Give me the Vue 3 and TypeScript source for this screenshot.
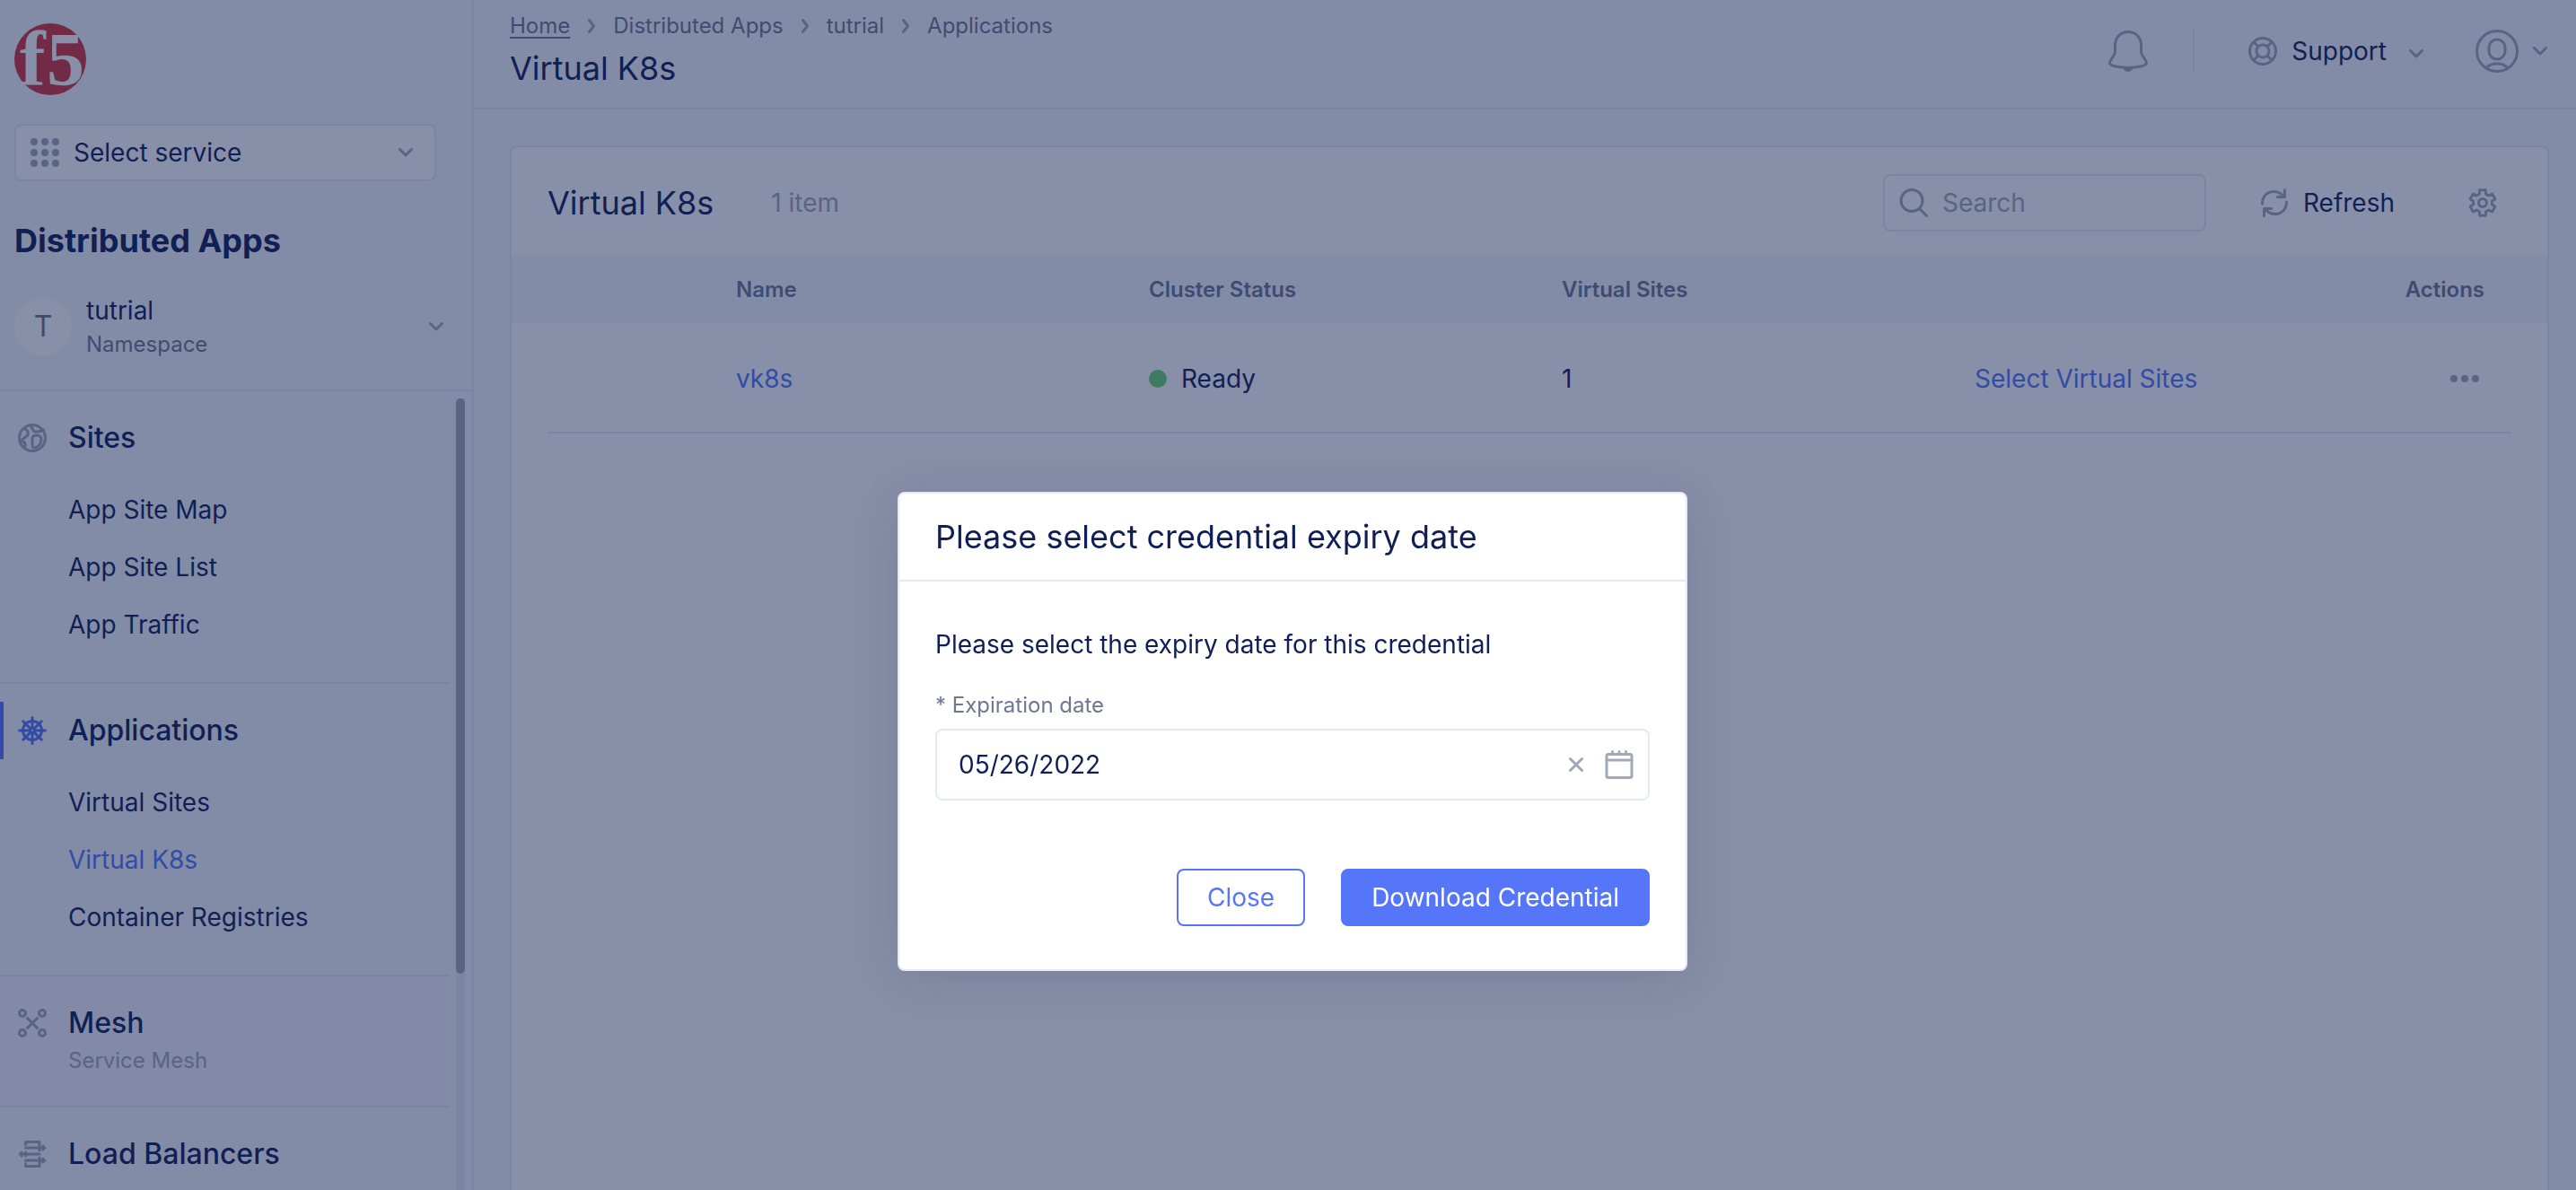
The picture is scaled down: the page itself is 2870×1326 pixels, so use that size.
<script setup lang="ts">
import { ref } from 'vue'

interface NavSection {
  title: string
  icon: 'globe' | 'helm' | 'mesh' | 'balancer'
  active?: boolean
  hovered?: boolean
  subtitle?: string
  items: string[]
}

interface Row {
  name: string
  status: string
  sites: number
}

const sections: NavSection[] = [
  { title: 'Sites', icon: 'globe', items: ['App Site Map', 'App Site List', 'App Traffic'] },
  { title: 'Applications', icon: 'helm', active: true, items: ['Virtual Sites', 'Virtual K8s', 'Container Registries'] },
  { title: 'Mesh', icon: 'mesh', hovered: true, subtitle: 'Service Mesh', items: [] },
  { title: 'Load Balancers', icon: 'balancer', items: [] },
]

const currentItem = 'Virtual K8s'
const crumbs = ['Home', 'Distributed Apps', 'tutrial', 'Applications']
const rows: Row[] = [{ name: 'vk8s', status: 'Ready', sites: 1 }]

const service = ref('Select service')
const search = ref('')
const expiry = ref('05/26/2022')
const dialogOpen = ref(true)

// Six-toothed gear outline, centred in a 32px box.
function gearPath(): string {
  const points: string[] = []
  const add = (radius: number, degrees: number) => {
    const a = (degrees * Math.PI) / 180
    points.push(`${(16 + radius * Math.cos(a)).toFixed(2)} ${(16 + radius * Math.sin(a)).toFixed(2)}`)
  }
  for (let i = 0; i < 6; i++) {
    const mid = -90 + i * 60
    add(10.5, mid - 20)
    add(14.5, mid - 13)
    add(14.5, mid + 13)
    add(10.5, mid + 20)
  }
  return `M${points.join('L')}Z`
}
const gear = gearPath()
const spokes = [0, 45, 90, 135, 180, 225, 270, 315]
</script>

<template>
  <div class="app">
    <aside class="sidebar">
      <div class="brand">
        <svg class="logo" viewBox="0 0 80 80" role="img" aria-label="f5">
          <circle cx="40" cy="40" r="40" fill="#d3353d" />
          <g fill="#fff" font-family="Liberation Serif, serif" font-weight="700">
            <text x="6" y="69" font-size="86">f</text>
            <text x="36" y="69" font-size="84">5</text>
          </g>
        </svg>
        <div class="service">
          <svg class="i32" viewBox="0 0 32 32" fill="#a1a9b9">
            <template v-for="y in [4, 16, 28]" :key="y">
              <circle v-for="x in [4, 16, 28]" :key="x" :cx="x" :cy="y" r="4" />
            </template>
          </svg>
          <select v-model="service" aria-label="Service">
            <option>Select service</option>
            <option>Distributed Apps</option>
          </select>
          <svg class="chevron" viewBox="0 0 16 10"><path d="M1.5 1.5L8 8L14.5 1.5" /></svg>
        </div>
        <h2>Distributed Apps</h2>
        <button class="namespace" type="button">
          <span class="avatar">T</span>
          <span class="ns-text">
            <span class="ns-name">tutrial</span>
            <span class="ns-kind">Namespace</span>
          </span>
          <svg class="chevron" viewBox="0 0 16 10"><path d="M1.5 1.5L8 8L14.5 1.5" /></svg>
        </button>
      </div>

      <div class="scroll">
        <nav>
          <section v-for="s in sections" :key="s.title" class="group" :class="{ hovered: s.hovered }">
            <div class="group-head" :class="{ active: s.active }">
              <svg v-if="s.icon === 'globe'" class="i32 line" viewBox="0 0 32 32">
                <circle cx="16" cy="16" r="14.500" />
                <path d="M7 5L11 8.500V13L4 18.500L8 22V27M14 2L18 9H23L28.500 7M16 17Q16 13 20 13H22Q26 14 26 18Q25 25 19 27Q16 27 16 24Z" />
              </svg>
              <svg v-else-if="s.icon === 'helm'" class="i32 line helm" viewBox="0 0 32 32">
                <circle cx="16" cy="16" r="10.500" />
                <circle cx="16" cy="16" r="2.500" />
                <path v-for="d in spokes" :key="d" d="M16 13V1.500" :transform="`rotate(${d} 16 16)`" />
              </svg>
              <svg v-else-if="s.icon === 'mesh'" class="i32 line" viewBox="0 0 32 32">
                <circle cx="5" cy="5" r="3.500" /><circle cx="27" cy="5" r="3.500" />
                <circle cx="5" cy="27" r="3.500" /><circle cx="27" cy="27" r="3.500" />
                <path d="M10.500 10.500L21.500 21.500M21.500 10.500L10.500 21.500" />
              </svg>
              <svg v-else class="i32 line" viewBox="0 0 32 32">
                <path d="M8.500 5.500V2.500H24V12M8.500 9H30M28 7V11M2 16H24M4 14V18M8.500 14V18M8.500 23H30M28 21V25M8.500 26.500V29.500H24V20" />
              </svg>
              <div>
                <h3>{{ s.title }}</h3>
                <p v-if="s.subtitle">{{ s.subtitle }}</p>
              </div>
            </div>
            <ul v-if="s.items.length">
              <li v-for="item in s.items" :key="item">
                <a href="#" :class="{ current: item === currentItem }">{{ item }}</a>
              </li>
            </ul>
          </section>
        </nav>
        <div class="track"><div class="thumb"></div></div>
      </div>
    </aside>

    <main>
      <header class="topbar">
        <div class="where">
          <div class="crumbs">
            <template v-for="(c, i) in crumbs" :key="c">
              <svg v-if="i > 0" class="crumb-sep" viewBox="0 0 8 16"><path d="M1.500 1.500L6.500 8L1.500 14.500" /></svg>
              <a href="#" :class="{ home: i === 0 }">{{ c }}</a>
            </template>
          </div>
          <h1>Virtual K8s</h1>
        </div>
        <div class="tools">
          <button type="button" class="bell" aria-label="Notifications">
            <svg class="line" viewBox="0 0 44 48">
              <path d="M22 2.500C13 2.500 7.500 9.500 7.500 17V24C7.500 30 1.500 33 1.500 37C1.500 40.500 12 42.500 22 42.500S42.500 40.500 42.500 37C42.500 33 36.500 30 36.500 24V17C36.500 9.500 31 2.500 22 2.500Z" />
              <path d="M17 43H27Q26 46.500 22 46.500T17 43Z" fill="#a1a9b9" stroke-width="1" />
            </svg>
          </button>
          <span class="divider"></span>
          <button type="button" class="support">
            <svg class="i32 line" viewBox="0 0 32 32">
              <circle cx="16" cy="16" r="14.500" />
              <circle cx="16" cy="16" r="7" />
              <path d="M21.500 10.500L26 6M10.500 10.500L6 6M21.500 21.500L26 26M10.500 21.500L6 26" />
            </svg>
            <span>Support</span>
            <svg class="chevron" viewBox="0 0 16 10"><path d="M1.5 1.5L8 8L14.5 1.5" /></svg>
          </button>
          <button type="button" class="account" aria-label="Account">
            <svg class="line" viewBox="0 0 48 48">
              <circle cx="24" cy="24" r="22.500" />
              <rect x="15" y="11" width="18" height="22" rx="9" />
              <path d="M12.500 42.500Q16 38 24 38T35.500 42.500" />
            </svg>
            <svg class="chevron" viewBox="0 0 16 10"><path d="M1.5 1.5L8 8L14.5 1.5" /></svg>
          </button>
        </div>
      </header>

      <div class="content">
        <div class="card">
          <div class="toolbar">
            <h2>Virtual K8s</h2>
            <span class="count">{{ rows.length }} item</span>
            <label class="search">
              <svg class="i32 line" viewBox="0 0 32 32">
                <circle cx="14" cy="13.500" r="12" /><path d="M22.500 22.500L30.500 30.500" />
              </svg>
              <input v-model="search" type="text" placeholder="Search" aria-label="Search" />
            </label>
            <button type="button" class="refresh">
              <svg class="i32 line" viewBox="0 0 32 32">
                <path d="M2.500 17C2.500 8.500 8.500 3.500 15 3.500C20 3.500 24 5.500 27 9.500M27.500 1.500V9.500H19.500M29.500 15C29.500 23.500 23.500 28.500 17 28.500C12 28.500 8 26.500 5 22.500M4.500 30.500V22.500H12.500" />
              </svg>
              <span>Refresh</span>
            </button>
            <button type="button" class="settings" aria-label="Settings">
              <svg class="i32 line" viewBox="0 0 32 32"><path :d="gear" /><circle cx="16" cy="16" r="4.500" /></svg>
            </button>
          </div>
          <table>
            <colgroup>
              <col class="gutter" /><col class="lead" /><col class="wide" /><col class="wide" /><col class="wide" /><col /><col class="end" /><col class="gutter" />
            </colgroup>
            <thead>
              <tr>
                <td></td>
                <td></td>
                <th scope="col">Name</th>
                <th scope="col">Cluster Status</th>
                <th scope="col">Virtual Sites</th>
                <td></td>
                <th scope="col" class="right">Actions</th>
                <td></td>
              </tr>
            </thead>
            <tbody>
              <tr v-for="r in rows" :key="r.name">
                <td></td>
                <td></td>
                <td><a href="#">{{ r.name }}</a></td>
                <td><span class="status"><i></i>{{ r.status }}</span></td>
                <td>{{ r.sites }}</td>
                <td><a href="#">Select Virtual Sites</a></td>
                <td class="right">
                  <button type="button" class="more" aria-label="More actions">
                    <svg viewBox="0 0 32 8" fill="#a1a9b9"><circle cx="4" cy="4" r="4" /><circle cx="16" cy="4" r="4" /><circle cx="28" cy="4" r="4" /></svg>
                  </button>
                </td>
                <td></td>
              </tr>
            </tbody>
          </table>
        </div>
      </div>
    </main>

    <div v-if="dialogOpen" class="overlay">
      <div class="dialog" role="dialog" aria-modal="true" aria-labelledby="dialog-title">
        <h2 id="dialog-title">Please select credential expiry date</h2>
        <div class="dialog-body">
          <p>Please select the expiry date for this credential</p>
          <label for="expiry">* Expiration date</label>
          <div class="date">
            <input id="expiry" v-model="expiry" type="text" />
            <button type="button" class="clear" aria-label="Clear date" @click="expiry = ''">
              <svg class="line" viewBox="0 0 16 16"><path d="M1.500 1.500L14.500 14.500M14.500 1.500L1.500 14.500" /></svg>
            </button>
            <button type="button" class="calendar" aria-label="Open calendar">
              <svg class="line" viewBox="0 0 32 32">
                <rect x="2" y="4.500" width="28" height="26" rx="2" />
                <path d="M2 11H30M8.500 1.500V4M16 1.500V4M23.500 1.500V4" />
              </svg>
            </button>
          </div>
          <div class="actions">
            <button type="button" class="btn" @click="dialogOpen = false">Close</button>
            <button type="button" class="btn primary">Download Credential</button>
          </div>
        </div>
      </div>
    </div>
  </div>
</template>

<style>
body {
  overflow: hidden;
}
</style>

<style scoped>
.app {
  display: flex;
  height: 100vh;
  overflow: hidden;
  background: #f5f8fc;
  color: #0f1e57;
  font-family: Inter, sans-serif;
  font-size: 28px;
  line-height: 40px;
}
.app * {
  box-sizing: border-box;
}
h1, h2, h3, p, ul {
  margin: 0;
  padding: 0;
  font-weight: 400;
}
ul {
  list-style: none;
}
a {
  color: inherit;
  text-decoration: none;
}
button, input, select {
  padding: 0;
  border: 0;
  background: none;
  color: inherit;
  font: inherit;
}
svg {
  display: block;
  flex: none;
}
.i32 {
  width: 32px;
  height: 32px;
}
.line {
  fill: none;
  stroke: #a1a9b9;
  stroke-width: 3;
  stroke-linecap: round;
  stroke-linejoin: round;
}
.line.helm {
  stroke: #5576f8;
}
.chevron {
  width: 16px;
  height: 10px;
  fill: none;
  stroke: #a1a9b9;
  stroke-width: 3;
  stroke-linecap: round;
  stroke-linejoin: round;
  pointer-events: none;
}

/* Sidebar */
.sidebar {
  display: flex;
  flex-direction: column;
  flex: none;
  width: 528px;
  border-right: 2px solid #e5e9f4;
}
.brand {
  padding: 26px 32px 32px 16px;
  border-bottom: 2px solid #e5e9f4;
}
.logo {
  width: 80px;
  height: 80px;
  overflow: visible;
}
.service {
  display: flex;
  align-items: center;
  height: 64px;
  margin: 32px 8px 0 0;
  padding: 0 24px 0 16px;
  border: 2px solid #e5e9f4;
  border-radius: 8px;
  background: #fff;
}
.service select {
  flex: 1;
  height: 40px;
  margin-left: 16px;
  appearance: none;
}
.brand h2 {
  margin-top: 42px;
  font-size: 36px;
  font-weight: 700;
  line-height: 48px;
}
.namespace {
  display: flex;
  align-items: center;
  width: 100%;
  margin-top: 34px;
  text-align: left;
}
.avatar {
  width: 64px;
  height: 64px;
  border-radius: 50%;
  background: #fff;
  color: #6d7890;
  font-size: 32px;
  line-height: 64px;
  text-align: center;
}
.ns-text {
  flex: 1;
  margin-left: 16px;
}
.ns-name, .ns-kind {
  display: block;
}
.ns-kind {
  color: #6d7890;
  font-size: 24px;
  line-height: 36px;
}
.scroll {
  display: flex;
  flex: 1;
  min-height: 0;
  overflow: hidden;
}
nav {
  flex: 1;
}
.group {
  padding: 20px 0 32px;
  border-bottom: 2px solid #e5e9f4;
}
.hovered {
  background: #f2f5fc;
}
.group-head {
  display: flex;
  padding: 12px 0 12px 20px;
}
.group-head.active {
  padding-left: 16px;
  border-left: 4px solid #5576f8;
  border-radius: 0 4px 4px 0;
}
.group-head svg {
  margin: 4px 24px 4px 0;
}
.group-head h3 {
  font-size: 32px;
  font-weight: 500;
}
.group-head p {
  margin-top: 6px;
  margin-bottom: -10px;
  color: #a1a9b9;
  font-size: 24px;
  line-height: 32px;
}
.group ul {
  margin-top: 16px;
}
.group li a {
  display: block;
  padding: 12px 0 12px 76px;
}
.group li a.current {
  color: #5576f8;
}
.track {
  flex: none;
  width: 10px;
  margin: 8px 8px 0;
  background: #e5e9f4;
}
.thumb {
  height: 641px;
  border-radius: 5px;
  background: #a1a9b9;
}

/* Top bar */
main {
  display: flex;
  flex-direction: column;
  flex: 1;
  min-width: 0;
}
.topbar {
  display: flex;
  justify-content: space-between;
  height: 122px;
  padding: 0 32px 0 40px;
  border-bottom: 2px solid #e5e9f4;
}
.crumbs {
  display: flex;
  align-items: center;
  gap: 20px;
  margin-top: 13px;
  color: #6d7890;
  font-size: 24px;
  line-height: 32px;
}
.home {
  text-decoration: underline;
  text-decoration-thickness: 2px;
  text-underline-offset: 4px;
}
.crumb-sep {
  width: 8px;
  height: 16px;
  fill: none;
  stroke: #a1a9b9;
  stroke-width: 3;
  stroke-linecap: round;
  stroke-linejoin: round;
}
h1 {
  margin-top: 7px;
  font-size: 36px;
  line-height: 48px;
}
.tools {
  display: flex;
  align-items: center;
  height: 114px;
}
.bell svg {
  width: 44px;
  height: 48px;
}
.divider {
  width: 2px;
  height: 48px;
  margin: 0 60px 0 50px;
  background: #e5e9f4;
}
.support {
  display: flex;
  align-items: center;
}
.support span {
  margin: 0 25px 0 16px;
}
.support .chevron {
  margin-top: 6px;
}
.account {
  display: flex;
  align-items: center;
  gap: 16px;
  margin-left: 58px;
}
.account .line {
  width: 48px;
  height: 48px;
}

/* Card */
.content {
  display: flex;
  flex: 1;
  padding: 40px 30px 0 40px;
}
.card {
  flex: 1;
  min-width: 0;
  border: 2px solid #e5e9f4;
  border-bottom: 0;
  border-radius: 8px 8px 0 0;
  background: #fff;
}
.toolbar {
  display: flex;
  align-items: center;
  height: 120px;
  padding: 4px 56px 0 40px;
}
.toolbar h2 {
  font-size: 36px;
}
.count {
  margin-left: 64px;
  color: #a1a9b9;
}
.search {
  display: flex;
  align-items: center;
  width: 360px;
  height: 64px;
  margin-left: auto;
  padding: 0 16px;
  border: 2px solid #e5e9f4;
  border-radius: 8px;
}
.search input {
  flex: 1;
  min-width: 0;
  height: 40px;
  margin-left: 16px;
}
.search input::placeholder {
  color: #a1a9b9;
  opacity: 1;
}
.refresh {
  display: flex;
  align-items: center;
  margin: 0 82px 0 60px;
}
.refresh span {
  margin-left: 16px;
}
table {
  width: 100%;
  border-collapse: collapse;
  table-layout: fixed;
}
.gutter {
  width: 40px;
}
.lead {
  width: 210px;
}
.wide {
  width: 460px;
}
.end {
  width: 140px;
}
th, td {
  padding: 2px 0 0;
  text-align: left;
}
thead {
  background: #f5f8fc;
}
thead tr {
  height: 76px;
}
th {
  color: #6d7890;
  font-size: 24px;
  font-weight: 600;
}
tbody td {
  height: 122px;
  border-bottom: 2px solid #e5e9f4;
}
tbody td:first-child, tbody td:last-child {
  border-bottom: 0;
}
tbody a {
  color: #5576f8;
}
.right {
  padding-right: 30px;
  text-align: right;
}
.status {
  display: flex;
  align-items: center;
  gap: 16px;
}
.status i {
  width: 20px;
  height: 20px;
  border-radius: 50%;
  background: #69d573;
}
.more {
  display: block;
  margin-left: auto;
  padding: 8px 6px;
}
.more svg {
  width: 32px;
  height: 8px;
}

/* Dialog */
.overlay {
  position: fixed;
  inset: 0;
  display: flex;
  align-items: center;
  justify-content: center;
  padding: 304px 0 0 10px;
  background: rgba(17, 31, 81, 0.5);
}
.dialog {
  width: 880px;
  border: 2px solid #e5e9f4;
  border-radius: 8px;
  background: #fff;
  box-shadow: 0 8px 60px rgba(15, 30, 87, 0.14);
}
.dialog h2 {
  padding: 24px 40px;
  border-bottom: 2px solid #e5e9f4;
  font-size: 36px;
  line-height: 48px;
}
.dialog-body {
  padding: 50px 40px 48px;
}
.dialog label {
  display: block;
  margin: 32px 0 10px;
  color: #6d7890;
  font-size: 24px;
  line-height: 32px;
}
.date {
  display: flex;
  align-items: center;
  height: 80px;
  padding: 0 16px 0 24px;
  border: 2px solid #e5e9f4;
  border-radius: 8px;
}
.date input {
  flex: 1;
  height: 40px;
}
.clear svg {
  width: 16px;
  height: 16px;
}
.calendar {
  margin-left: 24px;
}
.calendar svg {
  width: 32px;
  height: 32px;
}
.actions {
  display: flex;
  justify-content: flex-end;
  gap: 40px;
  margin-top: 76px;
}
.btn {
  height: 64px;
  padding: 0 32px;
  border: 2px solid #5576f8;
  border-radius: 8px;
  color: #5576f8;
}
.primary {
  background: #5576f8;
  color: #fff;
}
</style>
